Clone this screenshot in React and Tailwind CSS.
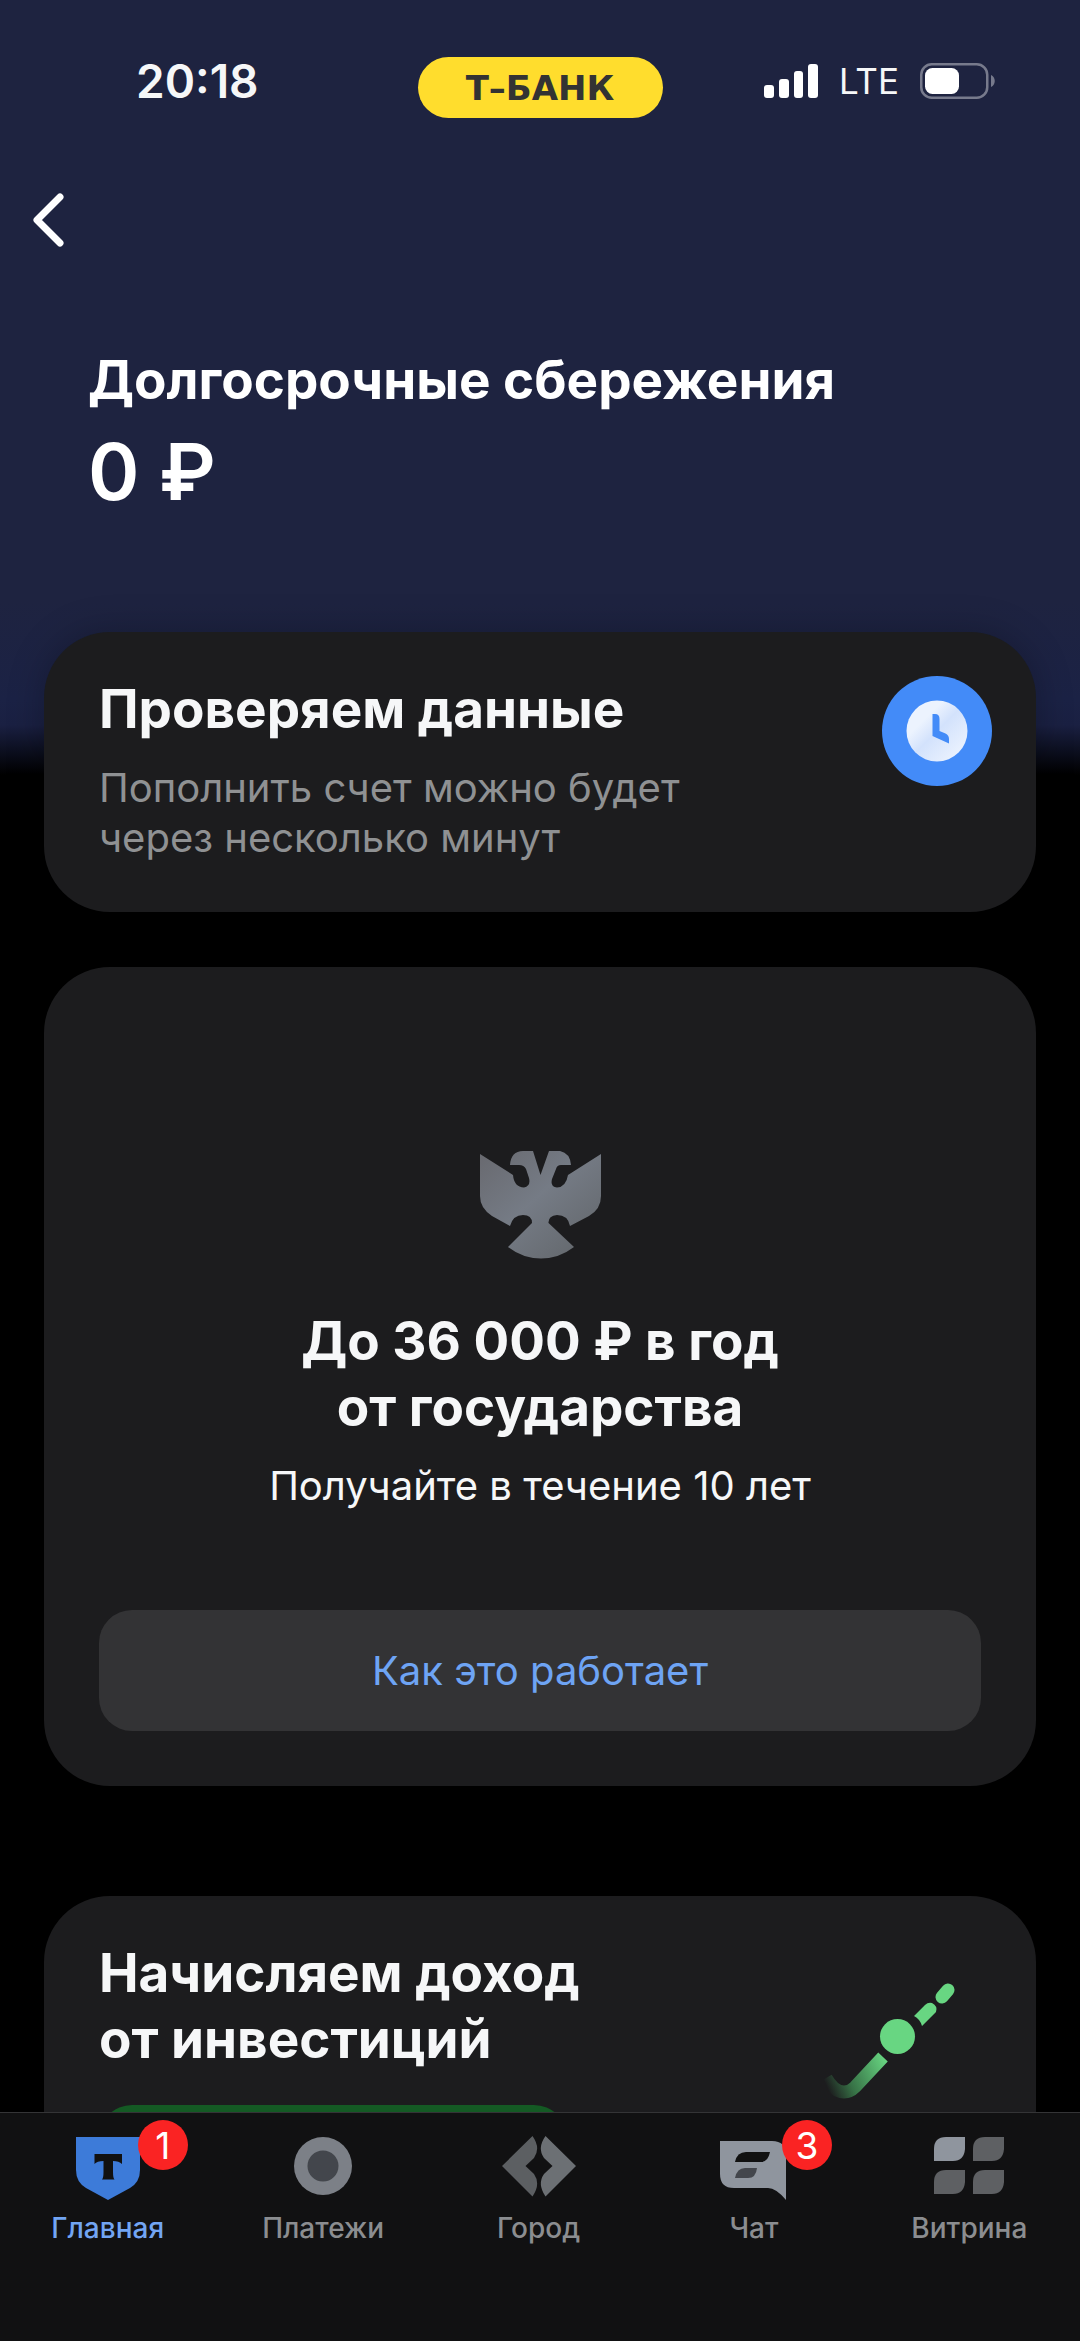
const SignalIcon = () => (
  <svg width="54" height="34" viewBox="0 0 54 34" fill="#fff" aria-hidden="true">
    <rect x="0" y="21" width="10" height="13" rx="3" />
    <rect x="15" y="15" width="10" height="19" rx="3" />
    <rect x="30" y="7" width="9" height="27" rx="3" />
    <rect x="44" y="0" width="10" height="34" rx="3" />
  </svg>
)

const BatteryIcon = () => (
  <svg width="76" height="36" viewBox="0 0 76 36" fill="none" aria-hidden="true">
    <rect x="1.25" y="1.25" width="66" height="33.5" rx="10.5" stroke="#777a8c" strokeWidth="2.5" />
    <rect x="5" y="5" width="34" height="26" rx="7.5" fill="#fff" />
    <path d="M71 12c5 2 5 10 0 12z" fill="#777a8c" />
  </svg>
)

const ClockIcon = () => (
  <svg width="110" height="110" viewBox="0 0 110 110" className="shrink-0" aria-hidden="true">
    <defs>
      <linearGradient id="clock" x1="0" y1="0" x2="1" y2="1">
        <stop offset="0.3" stopColor="#ecf3fe" />
        <stop offset="0.5" stopColor="#d3e2fc" />
        <stop offset="0.9" stopColor="#ecf3fe" />
      </linearGradient>
    </defs>
    <circle cx="55" cy="55" r="55" fill="#438bf8" />
    <circle cx="55" cy="55" r="30.500" fill="url(#clock)" />
    <path d="M50.500 38H53Q57.500 38 57.500 43V55L63.500 57.500Q67 59 67 63V67.500L50.500 60Z" fill="#438bf8" />
  </svg>
)

const EagleIcon = () => (
  <svg width="124" height="108" viewBox="39 31 124 108" aria-hidden="true">
    <defs>
      <linearGradient id="eagle" x1="0" y1="0" x2="1" y2="1">
        <stop offset="0" stopColor="#68696f" />
        <stop offset="0.45" stopColor="#757b85" />
        <stop offset="1" stopColor="#606468" />
      </linearGradient>
    </defs>
    <path
      d="M41 34L74 55Q75 67 85 67.500Q92 66 90 58L87 49Q85 45 80 45H71Q72 31 84 31H94L101.500 55L110 31H121Q131 33 132 45H122Q118 45 117 49L113 59Q111 67 118 67.500Q127 67 129 55L162 34V76Q162 89 150 96L131 106Q129 95 118 95Q109 96 109.500 103L135 127Q120 138.500 102 138.500Q84 138.500 69 127L93 103Q93 95 84 95Q74 95 71 106L53 96Q41 88 41 76Z"
      fill="url(#eagle)"
    />
  </svg>
)

const GrowthIcon = () => (
  <svg width="132" height="118" viewBox="44 23 132 118" fill="none" aria-hidden="true">
    <defs>
      <linearGradient id="growth" gradientUnits="userSpaceOnUse" x1="46" y1="125" x2="106" y2="98">
        <stop offset="0" stopColor="#1c1c1e" />
        <stop offset="0.35" stopColor="#377246" />
        <stop offset="1" stopColor="#68d682" />
      </linearGradient>
    </defs>
    <path d="M46 118Q54 132 64 132Q70 132 75 127L103 97" stroke="url(#growth)" strokeWidth="13" />
    <circle cx="117.500" cy="76.500" r="17.500" fill="#68d682" />
    <path d="M134 56L145 45Q148 42 152 43Q158 46 156 52L142 66Q140 59 134 56Z" fill="#68d682" />
    <path d="M162 37L168 30" stroke="#68d682" strokeWidth="13" strokeLinecap="round" />
  </svg>
)

const HomeIcon = () => (
  <svg width="64" height="64" viewBox="0 0 64 64" aria-hidden="true">
    <path d="M0 1H64V34Q64 46 54 52L32 64L10 52Q0 46 0 34Z" fill="#3d7bd9" />
    <path d="M18.500 18H46V28Q43 25 37 25V36Q37 42 38.500 43.500H26Q27.500 42 27.500 36V25Q21 25 18.500 28Z" fill="#111" />
  </svg>
)

const PaymentsIcon = () => (
  <svg width="64" height="64" viewBox="0 0 64 64" aria-hidden="true">
    <circle cx="32" cy="30" r="29" fill="#7c8087" />
    <circle cx="32" cy="30" r="15.500" fill="#43464c" />
  </svg>
)

const CityIcon = () => (
  <svg width="74" height="64" viewBox="0 0 74 64" aria-hidden="true">
    <path d="M30.500 0L0 30L30.500 60.500Q39 48 32 38L23.500 30L32 22Q39 12 30.500 0Z" fill="#5c5f62" />
    <path d="M43.500 0L74 30L43.500 60.500Q35 48 42 38L50.500 30L42 22Q35 12 43.500 0Z" fill="#6c7074" />
  </svg>
)

const ChatIcon = () => (
  <svg width="68" height="64" viewBox="0 0 68 64" aria-hidden="true">
    <path d="M0 5H52Q66 5 66 19V64Q56 52 48 52H14Q0 52 0 38Z" fill="#8f959e" />
    <path d="M15 26Q17 16 26 16H50Q48 26 41 26Z" fill="#111" />
    <path d="M15 42Q17 32 25 32H37Q36 42 28 42Z" fill="#43464c" />
  </svg>
)

const ShowcaseIcon = () => (
  <svg width="70" height="64" viewBox="0 0 70 64" aria-hidden="true">
    <path d="M0 25V13Q0 1 12 1H31V13Q30 25 19 25Z" fill="#8f959e" />
    <path d="M39 25V13Q39 1 51 1H70V13Q69 25 58 25Z" fill="#5e6063" />
    <path d="M0 58V46Q0 34 12 34H31V46Q30 58 19 58Z" fill="#5e6063" />
    <path d="M39 58V46Q39 34 51 34H70V46Q69 58 58 58Z" fill="#5e6063" />
  </svg>
)

const tabs = [
  { label: 'Главная', icon: HomeIcon, badge: 1, active: true },
  { label: 'Платежи', icon: PaymentsIcon },
  { label: 'Город', icon: CityIcon },
  { label: 'Чат', icon: ChatIcon, badge: 3 },
  { label: 'Витрина', icon: ShowcaseIcon },
]

const StatusBar = () => (
  <div className="grid grid-cols-3 items-start px-[84px] pt-[57px]">
    <div className="pl-[52px] text-[46px] leading-[48px] font-semibold">20:18</div>
    <div className="flex justify-center">
      <div className="flex h-[61px] w-[245px] items-center justify-center rounded-full bg-[#ffdd2d] font-['DejaVu_Sans',sans-serif] text-[34px] leading-none font-bold text-[#333]">
        Т–БАНК
      </div>
    </div>
    <div className="flex h-[48px] items-center justify-end gap-[21px]">
      <SignalIcon />
      <span className="text-[35px] leading-[36px]">LTE</span>
      <BatteryIcon />
    </div>
  </div>
)

const TabBar = () => (
  <nav className="sticky bottom-0 flex h-[229px] border-t border-[#343436] bg-[#111112] pr-[3px]">
    {tabs.map(({ label, icon: Icon, badge, active }) => (
      <a
        key={label}
        href="#"
        className={`flex flex-1 flex-col items-center gap-3 pt-[23px] text-[28px] leading-[32px] font-medium ${active ? 'text-[#72a5f3]' : 'text-[#8b8d90]'}`}
      >
        <span className="relative">
          <Icon />
          {badge && (
            <span className="absolute -top-4 left-[62px] flex size-[50px] items-center justify-center rounded-full bg-[#fa2323] text-[37px] leading-none font-normal text-white">
              {badge}
            </span>
          )}
        </span>
        {label}
      </a>
    ))}
  </nav>
)

const App = () => {
  return (
    <div className="flex h-screen flex-col overflow-hidden bg-black font-['Inter',sans-serif] text-[#f6f7f8]">
      <div className="min-h-0 flex-1 overflow-hidden bg-[linear-gradient(#1e2340_0px,#1e2340_600px,#1b2245_700px,#1a2042_725px,#000_775px)]">
        <StatusBar />

        <header className="text-white">
          <button type="button" aria-label="Назад" className="mt-[70px] ml-[27px] block">
            <svg width="42" height="64" viewBox="0 0 42 64" fill="none" aria-hidden="true">
              <path d="M33 9L10 32L33 55" stroke="#fff" strokeWidth="7" strokeLinecap="round" strokeLinejoin="round" />
            </svg>
          </button>
          <div className="mt-[95px] px-[88px]">
            <h1 className="text-[53px] leading-[66px] font-bold">Долгосрочные сбережения</h1>
            <p className="mt-[15px] text-[78px] leading-[88px] font-semibold">0 ₽</p>
          </div>
        </header>

        <main className="mt-[116px] flex flex-col px-[44px]">
          <section className="flex justify-between rounded-[66px] bg-[#1c1c1e] px-[55px] pt-[44px] pb-[49px] shadow-[0_0_36px_rgba(0,0,0,0.25)]">
            <div>
              <h2 className="text-[53px] leading-[66px] font-bold">Проверяем данные</h2>
              <p className="mt-[21px] text-[40px] leading-[50px] text-[#8f9193]">
                Пополнить счет можно будет
                <br />
                через несколько минут
              </p>
            </div>
            <div className="-mr-[11px]">
              <ClockIcon />
            </div>
          </section>

          <section className="mt-[55px] flex flex-col items-center rounded-[66px] bg-[#1c1c1e] px-[55px] pt-[184px] pb-[55px] text-center">
            <EagleIcon />
            <h2 className="mt-[49px] text-[53px] leading-[66px] font-bold">
              До 36 000 ₽ в год
              <br />
              от государства
            </h2>
            <p className="mt-[21px] text-[40px] leading-[50px]">Получайте в течение 10 лет</p>
            <button type="button" className="mt-[99px] h-[121px] w-full rounded-[33px] bg-[#333335] text-[40px] text-[#6ea4f4]">
              Как это работает
            </button>
          </section>

          <section className="mt-[110px] rounded-t-[66px] bg-[#1c1c1e] px-[55px] pt-[44px]">
            <div className="flex items-start justify-between">
              <h2 className="text-[53px] leading-[66px] font-bold">
                Начисляем доход
                <br />
                от инвестиций
              </h2>
              <div className="mt-[43px] mr-[25px]">
                <GrowthIcon />
              </div>
            </div>
            <div className="mt-1 h-[120px] w-[468px] rounded-[33px] bg-[#145a24]" />
          </section>
        </main>
      </div>
      <TabBar />
    </div>
  )
}

export default App
